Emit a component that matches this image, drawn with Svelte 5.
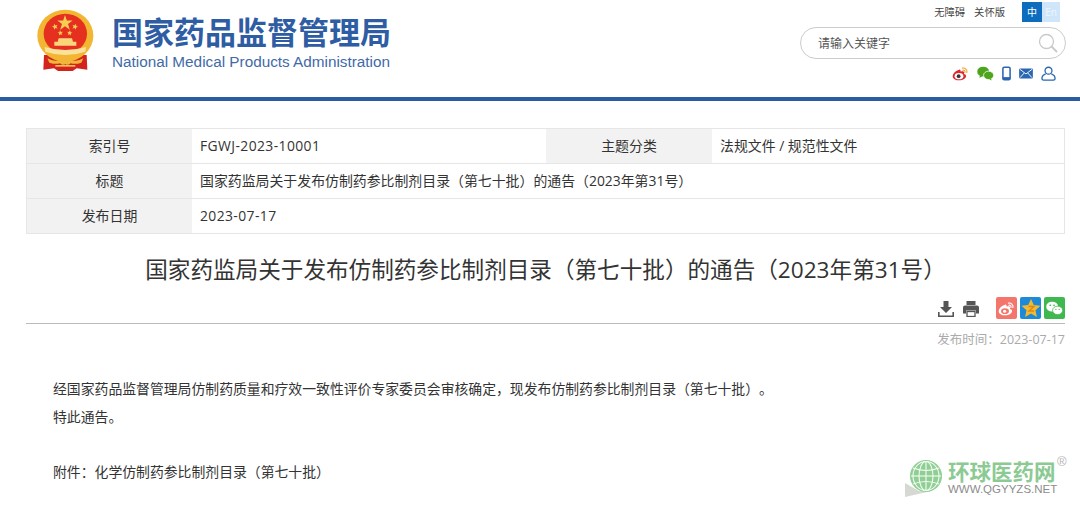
<script>
  const meta = [
    { label: "索引号", value: "FGWJ-2023-10001", label2: "主题分类", value2: "法规文件 / 规范性文件", latin: true },
    { label: "标题", value: "国家药监局关于发布仿制药参比制剂目录（第七十批）的通告（2023年第31号）" },
    { label: "发布日期", value: "2023-07-17", latin: true }
  ];
  const smallStars = [[75, 65, 9, -20], [135, 65, 9, 20], [91, 84, 8, -8], [119, 84, 8, 8]];
  const gridLines = [
    "M16 1.500a7 14.500 0 0 0 0 29",
    "M16 1.500a7 14.500 0 0 1 0 29",
    "M16 1.500a13 14.500 0 0 0 0 29",
    "M16 1.500a13 14.500 0 0 1 0 29",
    "M16 1v30",
    "M3 8q13 5 26 0",
    "M1 16h30",
    "M3 24q13-5 26 0"
  ];
</script>

<div class="page">
  <header class="top">
    <div class="brand">
      <svg class="emblem" viewBox="0 0 210 210" aria-hidden="true">
        <path d="M42 150L40 194L72 190L84 198H128L140 190L172 194L170 150Z" fill="#d3231f" />
        <ellipse cx="106" cy="92" rx="84" ry="78" fill="#f2b632" />
        <ellipse cx="106" cy="86" rx="65" ry="60" fill="#e5301f" />
        <path d="M105 30l5.500 16.500h17.500l-14 10.500 5.500 17-14.500-10.500-14.500 10.500 5.500-17-14-10.500h17.500z" fill="#f6cc55" />
        {#each smallStars as s}
          <polygon
            points="0,-8 2.400,-2.500 8,-2.500 3.600,1.200 5,7 0,3.600 -5,7 -3.600,1.200 -8,-2.500 -2.400,-2.500"
            fill="#f6cc55"
            transform="translate({s[0]} {s[1]}) rotate({s[3]}) scale({s[2] / 8})"
          />
        {/each}
        <path d="M86 100h40l3 10h10v12H73v-12h10z" fill="#f8d77c" />
        <path d="M44 126q62 18 124 0l-2 14q-60 20-120 0z" fill="#fbe29a" />
        <path d="M52 160q20 12 38 4 9-6 16 0 9-6 16 0 18 8 38-4l-6 13q-18 6-32 2-9 8-16 2-8 6-16-2-14 4-32-2z" fill="#f0b53a" />
        <path d="M76 180h60v5H76z" fill="#f2c14e" />
      </svg>
      <div class="names">
        <div class="cn">国家药品监督管理局</div>
        <div class="en">National Medical Products Administration</div>
      </div>
    </div>
    <div class="tools">
      <div class="links">
        <span>无障碍</span>
        <span class="care">关怀版</span>
        <div class="lang"><b>中</b><i>En</i></div>
      </div>
      <div class="search">
        <span>请输入关键字</span>
        <svg viewBox="0 0 20 20" width="20" height="20" aria-hidden="true">
          <circle cx="8.500" cy="8.500" r="7" fill="none" stroke="#c9c9c9" stroke-width="1.300" />
          <path d="M13.500 13.500l5.500 5.500" stroke="#c9c9c9" stroke-width="1.800" fill="none" />
        </svg>
      </div>
      <div class="socials">
        <svg viewBox="0 0 18 16" width="17" height="15" aria-hidden="true">
          <path d="M7.500 4C4 5 .7 8 .7 10.800.7 13.500 4 15.300 7.500 15.300c4.500 0 7.500-2.400 7.500-4.600 0-1.600-1.500-2-2.300-2.300.5-1.200.4-2.300-1-2.700-1-.3-2.700.3-2.700.3.3-1.300-.3-2.800-1.500-2z" fill="#e0262d" />
          <ellipse cx="7.400" cy="10.800" rx="4.700" ry="3.300" fill="#fff" />
          <circle cx="7" cy="10.900" r="2" fill="#333" />
          <path d="M11 2.300c3-.7 5.500 1.800 4.800 4.700M11.500 4.500c1.500-.3 2.700.9 2.300 2.300" fill="none" stroke="#f3a32a" stroke-width="1.200" stroke-linecap="round" />
        </svg>
        <svg viewBox="0 0 18 16" width="17" height="15" aria-hidden="true">
          <ellipse cx="6.500" cy="6" rx="6.300" ry="5.300" fill="#4da51e" />
          <path d="M3 10l-.5 2.800 3-1.800z" fill="#4da51e" />
          <ellipse cx="12.300" cy="10" rx="5.400" ry="4.500" fill="#4da51e" stroke="#fff" stroke-width=".8" />
          <path d="M15 13.500l.5 2-2.500-1.300z" fill="#4da51e" />
        </svg>
        <svg viewBox="0 0 10 16" width="9" height="15" aria-hidden="true">
          <rect x="1" y="1" width="8" height="14" rx="1.500" fill="none" stroke="#2a67b1" stroke-width="1.700" />
          <rect x="1" y="12" width="8" height="3" fill="#2a67b1" />
        </svg>
        <svg viewBox="0 0 15 12" width="14" height="11" aria-hidden="true">
          <rect y=".5" width="15" height="11" rx="1.500" fill="#2a67b1" />
          <path d="M1 1.500l6.500 5 6.500-5M1 10.500l4.500-5M14 10.500l-4.500-5" fill="none" stroke="#fff" stroke-width="1" />
        </svg>
        <svg viewBox="0 0 16 16" width="15" height="15" aria-hidden="true">
          <circle cx="8" cy="5" r="3.700" fill="none" stroke="#2a67b1" stroke-width="1.400" />
          <path d="M5 8.300C2.500 9.300 1 11 1 13c0 1.300.7 2 2 2h10c1.300 0 2-.7 2-2 0-2-1.500-3.700-4-4.700" fill="none" stroke="#2a67b1" stroke-width="1.400" />
        </svg>
      </div>
    </div>
  </header>

  <main class="article">
    <div class="meta">
      {#each meta as row}
        <div class="row">
          <div class="key">{row.label}</div>
          <div class="val" class:latin={row.latin}>{row.value}</div>
          {#if row.label2}
            <div class="key">{row.label2}</div>
            <div class="val">{row.value2}</div>
          {/if}
        </div>
      {/each}
    </div>

    <h1>国家药监局关于发布仿制药参比制剂目录（第七十批）的通告（2023年第31号）</h1>

    <div class="actions">
      <svg viewBox="0 0 16 16" width="16" height="16" aria-hidden="true">
        <path d="M5.500 0h5v6h3.500L8 12 2 6h3.500z" fill="#555" />
        <path d="M.8 11v4.200h14.400V11" fill="none" stroke="#555" stroke-width="1.600" />
      </svg>
      <svg viewBox="0 0 16 16" width="16" height="16" aria-hidden="true">
        <path d="M3.500 0h9v4h-9z" fill="#555" />
        <path d="M2 4.500h12a2 2 0 0 1 2 2v6h-3v-3H3v3H0v-6a2 2 0 0 1 2-2z" fill="#555" />
        <rect x="4" y="10.500" width="8" height="5" fill="none" stroke="#555" stroke-width="1.300" />
      </svg>
      <div class="shares">
        <div class="share weibo">
          <svg viewBox="0 0 18 16" width="17" height="15" aria-hidden="true">
            <path d="M7.500 4C4 5 .7 8 .7 10.800.7 13.500 4 15.300 7.500 15.300c4.500 0 7.500-2.400 7.500-4.600 0-1.600-1.500-2-2.300-2.300.5-1.200.4-2.300-1-2.700-1-.3-2.700.3-2.700.3.3-1.300-.3-2.800-1.500-2z" fill="#fff" />
            <ellipse cx="7.400" cy="10.800" rx="4.200" ry="3" fill="#f4756b" />
            <circle cx="7" cy="10.900" r="1.700" fill="#fff" />
            <path d="M11 2.300c3-.7 5.500 1.800 4.800 4.700M11.500 4.500c1.500-.3 2.700.9 2.300 2.300" fill="none" stroke="#fff" stroke-width="1.200" stroke-linecap="round" />
          </svg>
        </div>
        <div class="share qzone">
          <svg viewBox="0 0 20 20" width="20" height="20" aria-hidden="true">
            <path d="M10 1l2.800 6 6.700.8-5 4.500 1.400 6.700-5.900-3.400L4.100 19l1.400-6.700-5-4.500 6.700-.8z" fill="#f5b92e" />
            <path d="M7.500 8.500h5.500L8 13h5" fill="none" stroke="#d8891a" stroke-width="1.300" />
          </svg>
        </div>
        <div class="share wechat">
          <svg viewBox="0 0 18 16" width="17" height="15" aria-hidden="true">
            <ellipse cx="6.500" cy="6" rx="6.300" ry="5.300" fill="#fff" />
            <ellipse cx="12.300" cy="10" rx="5.400" ry="4.500" fill="#fff" stroke="#3fb94f" stroke-width=".8" />
            <circle cx="4.500" cy="4.500" r=".9" fill="#3fb94f" />
            <circle cx="8.500" cy="4.500" r=".9" fill="#3fb94f" />
            <circle cx="10.500" cy="9" r=".7" fill="#3fb94f" />
            <circle cx="14" cy="9" r=".7" fill="#3fb94f" />
          </svg>
        </div>
      </div>
    </div>

    <div class="time">发布时间：2023-07-17</div>

    <div class="body">
      <p>经国家药品监督管理局仿制药质量和疗效一致性评价专家委员会审核确定，现发布仿制药参比制剂目录（第七十批）。</p>
      <p>特此通告。</p>
      <p class="attach">附件：化学仿制药参比制剂目录（第七十批）</p>
    </div>
  </main>

  <div class="mark">
    <svg class="globe" viewBox="0 0 38 38" width="38" height="38" aria-hidden="true">
      <path d="M0 24l14 8 8 1-22 5z" fill="#d5d8d3" />
      <g transform="translate(5 1)">
        <circle cx="16" cy="16" r="16" fill="#8fcf94" />
        <g fill="none" stroke="#f4fbf4" stroke-width="1.100">
          {#each gridLines as d}
            <path d={d} />
          {/each}
        </g>
      </g>
    </svg>
    <div class="mark-text">
      <div class="mark-cn">环球医药网</div>
      <div class="mark-en">WWW.QGYYZS.NET</div>
    </div>
    <span class="reg">®</span>
  </div>
</div>

<style>
  :global(body) {
    margin: 0;
    background: #fff;
  }
  .page {
    position: relative;
    width: 1080px;
    height: 510px;
    overflow: hidden;
    font-family: "Open Sans", "Noto Sans CJK SC", sans-serif;
    color: #333;
    text-spacing-trim: space-all;
  }
  .top {
    box-sizing: border-box;
    height: 101px;
    border-bottom: 4px solid #2b5c9f;
    padding: 0 14px 0 30px;
    display: flex;
    justify-content: space-between;
  }
  .brand {
    display: flex;
    gap: 12px;
    padding-top: 5px;
  }
  .emblem {
    width: 70px;
    height: 70px;
  }
  .names {
    padding-top: 6px;
  }
  .cn {
    font-family: "Noto Sans CJK SC", sans-serif;
    font-size: 31px;
    line-height: 40px;
    font-weight: 700;
    color: #2e5da4;
    white-space: nowrap;
  }
  .en {
    font-family: "Liberation Sans", sans-serif;
    font-size: 15.300px;
    line-height: 18px;
    margin-top: 2px;
    color: #3f6aa8;
    white-space: nowrap;
  }
  .tools {
    width: 266px;
    display: flex;
    flex-direction: column;
    align-items: flex-end;
  }
  .links {
    display: flex;
    align-items: center;
    height: 21px;
    margin-top: 1px;
    margin-right: 6px;
    font-size: 10.300px;
    color: #444;
  }
  .care {
    margin-left: 9px;
  }
  .lang {
    display: flex;
    margin-left: 17px;
    font-size: 10px;
    line-height: 20px;
    text-align: center;
  }
  .lang b {
    width: 20px;
    background: #0d6cbd;
    color: #fff;
    font-weight: 400;
  }
  .lang i {
    width: 18px;
    background: #cfe6fa;
    color: #eef6fd;
    font-style: normal;
  }
  .search {
    box-sizing: border-box;
    width: 266px;
    height: 32px;
    margin-top: 5px;
    border: 1px solid #ccc;
    border-radius: 16px;
    padding: 0 7px 0 17px;
    display: flex;
    align-items: center;
    justify-content: space-between;
    font-size: 12px;
    color: #555;
    flex: none;
  }
  .socials {
    display: flex;
    align-items: center;
    gap: 8px;
    margin-top: 6px;
    padding-right: 10px;
    height: 16px;
  }
  .article {
    padding: 27px 15px 0 26px;
  }
  .meta {
    border: 1px solid #e6e6e6;
    border-bottom: 0;
  }
  .row {
    display: grid;
    grid-template-columns: 165px 354px 166px 1fr;
    height: 35px;
    box-sizing: border-box;
    border-bottom: 1px solid #e6e6e6;
    font-size: 13.900px;
    line-height: 34px;
  }
  .key {
    background: #f2f2f2;
    text-align: center;
  }
  .val {
    padding-left: 8px;
    white-space: nowrap;
  }
  .val.latin {
    letter-spacing: 0.4px;
  }
  h1 {
    margin: 21px 0 0;
    font-size: 22.600px;
    line-height: 30px;
    font-weight: 400;
    text-align: center;
    color: #333;
    white-space: nowrap;
  }
  .actions {
    display: flex;
    align-items: center;
    justify-content: flex-end;
    gap: 9px;
    height: 28px;
    margin-top: 10px;
    border-bottom: 1px solid #bbb;
  }
  .shares {
    display: flex;
    gap: 3px;
    margin-left: 8px;
    margin-top: 2px;
    align-self: flex-start;
  }
  .share {
    width: 21px;
    height: 22px;
    border-radius: 2px;
    display: flex;
    align-items: center;
    justify-content: center;
  }
  .weibo { background: #f4756b; }
  .qzone { background: #1c8ad8; }
  .wechat { background: #3fb94f; }
  .time {
    margin-top: 7px;
    font-size: 12.500px;
    line-height: 18px;
    text-align: right;
    color: #aaa;
  }
  .body {
    margin-top: 26px;
    padding-left: 27px;
    font-size: 13.850px;
    line-height: 28px;
  }
  .body p {
    margin: 0;
    white-space: nowrap;
  }
  .body .attach {
    margin-top: 27px;
  }
  .mark {
    position: absolute;
    left: 905px;
    top: 459px;
    display: flex;
    gap: 5px;
  }
  .mark-cn {
    font-family: "Noto Sans CJK SC", sans-serif;
    font-size: 21.500px;
    line-height: 24px;
    font-weight: 700;
    color: #8cca94;
    white-space: nowrap;
  }
  .mark-en {
    font-family: "Liberation Sans", sans-serif;
    font-size: 11.500px;
    line-height: 13px;
    color: #8c8c8c;
    white-space: nowrap;
  }
  .reg {
    position: absolute;
    left: 152px;
    top: -5px;
    font-family: "Liberation Sans", sans-serif;
    font-size: 13px;
    line-height: 16px;
    color: #b5b5b5;
  }
</style>
